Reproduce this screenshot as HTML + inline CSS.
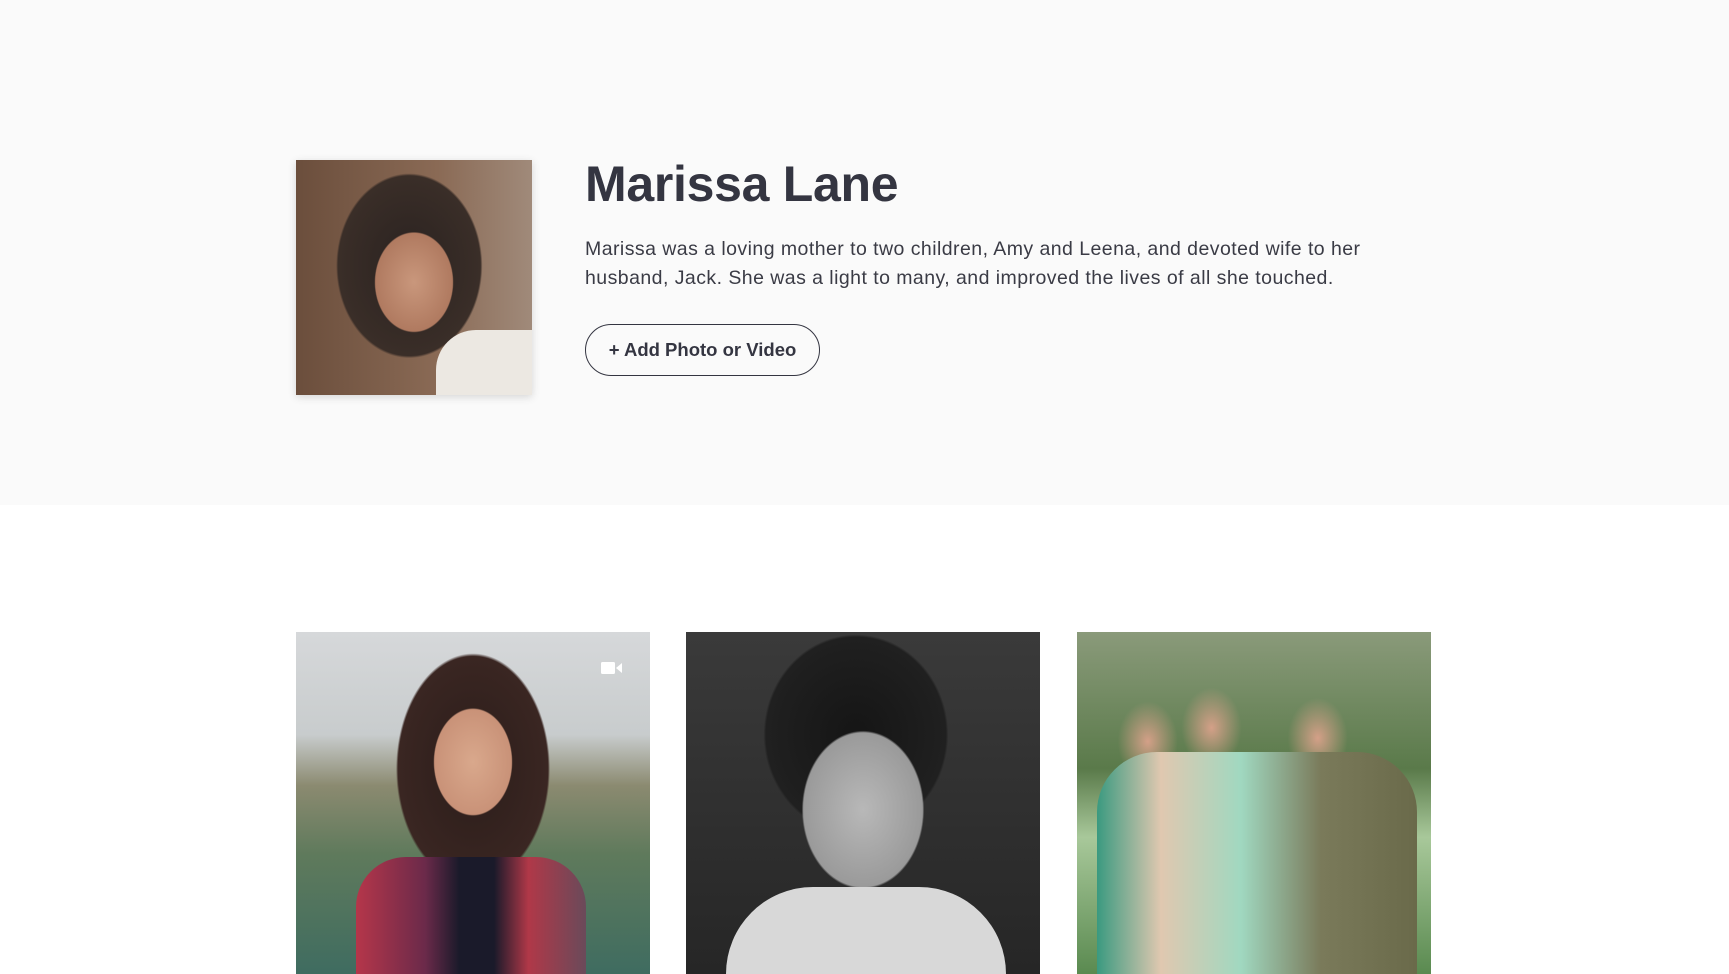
<!DOCTYPE html>
<html><head><style>
body{margin:0;width:1729px;height:974px;overflow:hidden;background:#fff;font-family:"Liberation Sans",sans-serif;}
.band{position:absolute;left:0;top:0;width:1729px;height:505px;background:#fafafa;}
.avatar{position:absolute;left:296px;top:160px;width:236px;height:235px;box-shadow:0 2px 8px rgba(0,0,0,.15);
background:radial-gradient(ellipse 55px 70px at 50% 52%,#c9977c 0,#b07a60 70%,transparent 72%),radial-gradient(ellipse 95px 120px at 48% 45%,#2a2220 0,#3a2e28 75%,transparent 77%),linear-gradient(90deg,#6b4e3c,#8a6a55 60%,#a08a7a);}
.avatar:after{content:"";position:absolute;left:140px;top:170px;width:96px;height:65px;background:#ece8e2;border-radius:40px 0 0 0;}
h1{position:absolute;left:585px;top:155px;margin:0;font-size:50px;font-weight:bold;color:#343541;letter-spacing:-0.3px;}
p{position:absolute;left:585px;top:235px;margin:0;width:830px;font-size:19.5px;line-height:29px;color:#3a3b45;letter-spacing:0.45px;}
.btn{position:absolute;left:585px;top:324px;width:235px;height:52px;border:1.5px solid #343541;border-radius:26px;box-sizing:border-box;font-size:18.5px;font-weight:bold;color:#343541;text-align:center;line-height:49px;background:#fafafa;}
.card{position:absolute;top:632px;width:354px;height:342px;}
.c1{left:296px;background:radial-gradient(ellipse 55px 75px at 50% 38%,#d9a88c 0,#c99278 70%,transparent 72%),radial-gradient(ellipse 100px 150px at 50% 40%,#2b1d1a 0,#3a2622 75%,transparent 77%),linear-gradient(180deg,#d6d8da 0,#c8cccd 30%,#8b8a70 45%,#5f7a5c 65%,#3f6c60 100%);}
.c1:after{content:"";position:absolute;left:60px;top:225px;width:230px;height:117px;background:linear-gradient(90deg,#b5364a,#6b2a4a 30%,#1a1a2a 45%,#1a1a2a 60%,#b03848 75%,#6a4a5a);border-radius:50px 50px 0 0;}
.c2{left:686px;background:radial-gradient(ellipse 85px 110px at 50% 52%,#b8b8b8 0,#9a9a9a 70%,transparent 72%),radial-gradient(ellipse 120px 130px at 48% 30%,#151515 0,#202020 75%,transparent 77%),linear-gradient(180deg,#3a3a3a,#262626);}
.c2:after{content:"";position:absolute;left:40px;top:255px;width:280px;height:87px;background:#d8d8d8;border-radius:90px 90px 0 0;}
.c3{left:1077px;background:radial-gradient(ellipse 30px 40px at 20% 32%,#d4a088 0,transparent 100%),radial-gradient(ellipse 30px 40px at 38% 28%,#d4a088 0,transparent 100%),radial-gradient(ellipse 30px 40px at 68% 31%,#d4a088 0,transparent 100%),linear-gradient(180deg,#8a9a7a 0,#5a7a4a 40%,#a8c89a 60%,#5a8a50 100%);}
.c3:after{content:"";position:absolute;left:20px;top:120px;width:320px;height:222px;background:linear-gradient(90deg,#3a9a80,#e0c8b0 20%,#a0d8c0 45%,#7a7a5a 70%,#6a6a4a);border-radius:60px 60px 0 0;}
.vid{position:absolute;left:601px;top:661px;}
</style></head><body>
<div class="band"></div>
<div class="avatar"></div>
<h1>Marissa Lane</h1>
<p>Marissa was a loving mother to two children, Amy and Leena, and devoted wife to her husband, Jack. She was a light to many, and improved the lives of all she touched.</p>
<div class="btn">+ Add Photo or Video</div>
<div class="card c1"></div>
<div class="card c2"></div>
<div class="card c3"></div>
<svg class="vid" width="22" height="14" viewBox="0 0 22 14"><rect x="0" y="1" width="14" height="12" rx="1.5" fill="#fff"/><path d="M15 7l6-5v10z" fill="#fff"/></svg>
</body></html>
